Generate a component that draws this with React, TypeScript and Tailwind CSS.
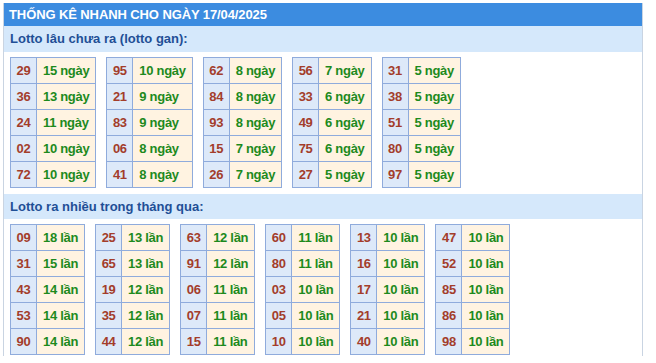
const gan = [
  [["29", "15"], ["36", "13"], ["24", "11"], ["02", "10"], ["72", "10"]],
  [["95", "10"], ["21", "9"], ["83", "9"], ["06", "8"], ["41", "8"]],
  [["62", "8"], ["84", "8"], ["93", "8"], ["15", "7"], ["26", "7"]],
  [["56", "7"], ["33", "6"], ["49", "6"], ["75", "6"], ["27", "5"]],
  [["31", "5"], ["38", "5"], ["51", "5"], ["80", "5"], ["97", "5"]],
];

const nhieu = [
  [["09", "18"], ["31", "15"], ["43", "14"], ["53", "14"], ["90", "14"]],
  [["25", "13"], ["65", "13"], ["19", "12"], ["35", "12"], ["44", "12"]],
  [["63", "12"], ["91", "12"], ["06", "11"], ["07", "11"], ["15", "11"]],
  [["60", "11"], ["80", "11"], ["03", "10"], ["05", "10"], ["10", "10"]],
  [["13", "10"], ["16", "10"], ["17", "10"], ["21", "10"], ["40", "10"]],
  [["47", "10"], ["52", "10"], ["85", "10"], ["86", "10"], ["98", "10"]],
];

function LottoTable({ rows, unit }: { rows: string[][]; unit: string }) {
  return (
    <table className="border-collapse">
      <tbody>
        {rows.map(([num, count]) => (
          <tr key={num} className="h-[26px]">
            <td className="w-[26px] border border-[#8fabdc] bg-[#dde9f9] text-center text-[#a33d2b]">{num}</td>
            <td className="border border-[#8fabdc] bg-[#fff3e1] px-[6px] text-[#1d8a1d]">
              {count} {unit}
            </td>
          </tr>
        ))}
      </tbody>
    </table>
  );
}

export default function App() {
  return (
    <div className="bg-white pt-[3px] pl-[3px] h-[363px]" style={{ fontFamily: '"Liberation Sans", Arial, sans-serif' }}>
      <div className="w-[640px] border-x border-[#c9d4e2] h-[353px]">
        <div className="h-[23px] bg-[#3c8ce0] pl-[5px] text-[13px] font-bold leading-[23px] text-white tracking-[-0.1px]">
          THỐNG KÊ NHANH CHO NGÀY 17/04/2025
        </div>

        <div className="h-[26px] bg-[#d5e8fb] pl-[6px] text-[13px] font-bold leading-[26px] text-[#1f4f96]">
          Lotto lâu chưa ra (lotto gan):
        </div>
        <div className="flex gap-[10px] pl-[6px] pt-[5px] pb-[6px] text-[13px] font-bold tracking-[-0.3px]">
          {gan.map((rows, i) => (
            <LottoTable key={i} rows={rows} unit="ngày" />
          ))}
        </div>

        <div className="h-[25px] bg-[#d5e8fb] pl-[6px] text-[13px] font-bold leading-[25px] text-[#1f4f96]">
          Lotto ra nhiều trong tháng qua:
        </div>
        <div className="flex gap-[10px] pl-[6px] pt-[5px] text-[13px] font-bold tracking-[-0.3px]">
          {nhieu.map((rows, i) => (
            <LottoTable key={i} rows={rows} unit="lần" />
          ))}
        </div>
      </div>
    </div>
  );
}
